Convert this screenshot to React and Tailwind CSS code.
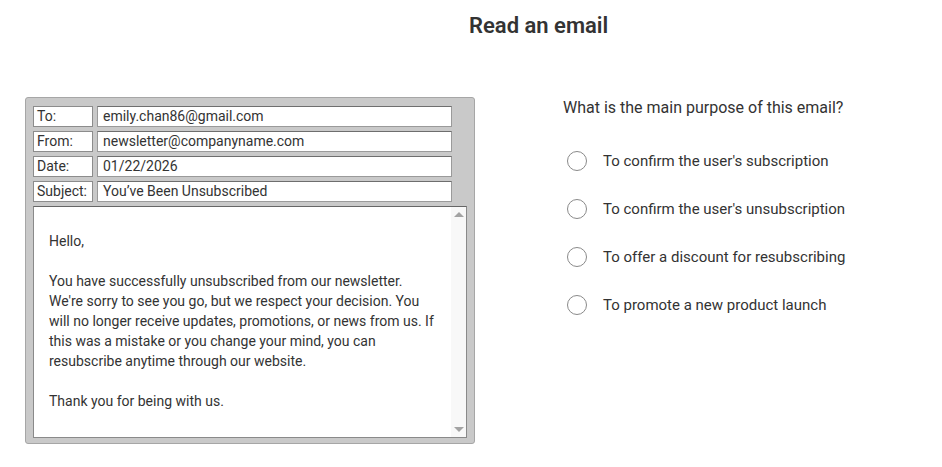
import React, { useState } from 'react';

const fields = [
    { label: 'To:', value: 'emily.chan86@gmail.com' },
    { label: 'From:', value: 'newsletter@companyname.com' },
    { label: 'Date:', value: '01/22/2026' },
    { label: 'Subject:', value: 'You\u2019ve Been Unsubscribed' },
];

const options = [
    "To confirm the user's subscription",
    "To confirm the user's unsubscription",
    'To offer a discount for resubscribing',
    'To promote a new product launch',
];

const App = () => {
    const [picked, setPicked] = useState(null);

    return (
        <div className="w-[942px] h-[467px] bg-white text-[#333] font-['Roboto','Liberation_Sans',sans-serif]">
            <h1 className="pt-[12px] pl-[469px] text-[22px] leading-[28px] font-semibold text-[#333]">Read an email</h1>

            <div className="flex mt-[57px] pl-[25px]">
                {/* email window */}
                <div className="w-[450px] h-[347px] bg-[#c9c9c9] border border-[#a6a6a6] rounded-[3px] pt-[8px] pl-[7px]">
                    <div className="flex flex-col gap-[4px]">
                        {fields.map(f => (
                            <div key={f.label} className="flex gap-[4px]">
                                <div className="w-[60px] h-[21px] bg-white border border-[#8c8c8c] pl-[3px] text-[14px] leading-[19px]">{f.label}</div>
                                <div className="w-[355px] h-[21px] bg-white border border-[#9a9a9a] border-t-[#6e6e6e] pl-[5px] text-[14px] leading-[19px]">{f.value}</div>
                            </div>
                        ))}
                    </div>
                    <div className="flex w-[434px] h-[232px] mt-[4px] bg-white border border-[#8a8a8a] border-t-[#666]">
                        <div className="flex-1 pl-[15px] pt-[24px] pr-[16px] text-[14px] leading-[20px]">
                            <p>Hello,</p>
                            <p className="mt-[20px]">
                                You have successfully unsubscribed from our newsletter. We're sorry to see you go, but we respect your decision. You will no longer receive updates, promotions, or news from us. If this was a mistake or you change your mind, you can resubscribe anytime through our website.
                            </p>
                            <p className="mt-[20px]">Thank you for being with us.</p>
                        </div>
                        <div className="w-[15px] bg-[#f8f8f8] flex flex-col justify-between items-center py-[5px]">
                            <div className="w-0 h-0 border-l-[5px] border-r-[5px] border-b-[5px] border-l-transparent border-r-transparent border-b-[#a3a3a3]"></div>
                            <div className="w-0 h-0 border-l-[5px] border-r-[5px] border-t-[5px] border-l-transparent border-r-transparent border-t-[#a3a3a3]"></div>
                        </div>
                    </div>
                </div>

                {/* question */}
                <div className="ml-[88px] pt-[1px]">
                    <p className="text-[16px] leading-[20px]">What is the main purpose of this email?</p>
                    <div className="flex flex-col gap-[28px] mt-[33px] pl-[4px]">
                        {options.map((o, i) => (
                            <label key={o} className="flex items-center gap-[16px] cursor-pointer" onClick={() => setPicked(i)}>
                                <span className="w-[20px] h-[20px] rounded-full border border-[#8a8a8a] bg-white flex items-center justify-center">
                                    {picked === i && <span className="w-[10px] h-[10px] rounded-full bg-[#555]"></span>}
                                </span>
                                <span className="text-[15px] leading-[20px]">{o}</span>
                            </label>
                        ))}
                    </div>
                </div>
            </div>
        </div>
    );
};

export default App;
